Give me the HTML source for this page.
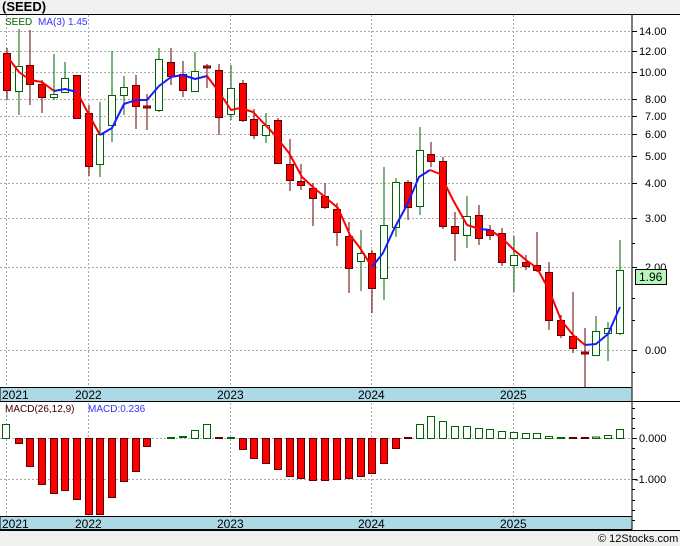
<!DOCTYPE html>
<html><head><meta charset="utf-8"><style>
html,body{margin:0;padding:0;background:#f0f0f0;}
svg{display:block;font-family:"Liberation Sans",sans-serif;}
</style></head><body>
<svg width="680" height="546" viewBox="0 0 680 546" xmlns="http://www.w3.org/2000/svg">
<rect x="0" y="0" width="680" height="546" fill="#f0f0f0"/>
<text x="2" y="11" font-size="13" font-weight="bold" fill="#000">(SEED)</text>
<rect x="0" y="14" width="680" height="516" fill="#fff"/>
<line x1="0" y1="14.5" x2="680" y2="14.5" stroke="#000"/>
<!-- grid -->
<g stroke="#aaa" stroke-dasharray="2,2" stroke-width="1">
<line x1="0" y1="31.5" x2="632" y2="31.5"/><line x1="0" y1="51.5" x2="632" y2="51.5"/><line x1="0" y1="72.5" x2="632" y2="72.5"/><line x1="0" y1="99.5" x2="632" y2="99.5"/><line x1="0" y1="116.5" x2="632" y2="116.5"/><line x1="0" y1="134.5" x2="632" y2="134.5"/><line x1="0" y1="156.5" x2="632" y2="156.5"/><line x1="0" y1="183.5" x2="632" y2="183.5"/><line x1="0" y1="218.5" x2="632" y2="218.5"/><line x1="0" y1="267.5" x2="632" y2="267.5"/><line x1="0" y1="350.5" x2="632" y2="350.5"/>
<line x1="6.5" y1="15" x2="6.5" y2="530"/><line x1="88.5" y1="15" x2="88.5" y2="530"/><line x1="230.5" y1="15" x2="230.5" y2="530"/><line x1="371.5" y1="15" x2="371.5" y2="530"/><line x1="513.5" y1="15" x2="513.5" y2="530"/>
<line x1="0" y1="438.5" x2="632" y2="438.5"/><line x1="0" y1="479.5" x2="632" y2="479.5"/>
</g>
<text x="5" y="25" font-size="10" fill="#006400">SEED</text>
<text x="38" y="25" font-size="10" fill="#3333ff">MA(3)  1.45</text>
<!-- candles -->
<g stroke-width="1">
<g stroke="#600000">
<line x1="7" y1="48" x2="7" y2="100"/><line x1="30" y1="30" x2="30" y2="105"/><line x1="42" y1="80" x2="42" y2="113"/><line x1="77" y1="75" x2="77" y2="118"/><line x1="89" y1="105" x2="89" y2="176"/><line x1="136" y1="75" x2="136" y2="129"/><line x1="147" y1="94" x2="147" y2="130"/><line x1="171" y1="48" x2="171" y2="85"/><line x1="183" y1="61" x2="183" y2="97"/><line x1="207" y1="64" x2="207" y2="88"/><line x1="219" y1="64" x2="219" y2="135"/><line x1="243" y1="80" x2="243" y2="122"/><line x1="254" y1="109" x2="254" y2="139"/><line x1="278" y1="118" x2="278" y2="163"/><line x1="290" y1="139" x2="290" y2="191"/><line x1="301" y1="164" x2="301" y2="190"/><line x1="313" y1="183" x2="313" y2="226"/><line x1="325" y1="183" x2="325" y2="209"/><line x1="337" y1="203" x2="337" y2="246"/><line x1="349" y1="222" x2="349" y2="293"/><line x1="372" y1="250" x2="372" y2="313"/><line x1="408" y1="180" x2="408" y2="220"/><line x1="431" y1="142" x2="431" y2="167"/><line x1="443" y1="157" x2="443" y2="229"/><line x1="455" y1="212" x2="455" y2="261"/><line x1="479" y1="205" x2="479" y2="245"/><line x1="490" y1="225" x2="490" y2="240"/><line x1="502" y1="228" x2="502" y2="266"/><line x1="526" y1="255" x2="526" y2="270"/><line x1="537" y1="232" x2="537" y2="272"/><line x1="549" y1="262" x2="549" y2="330"/><line x1="561" y1="315" x2="561" y2="338"/><line x1="573" y1="292" x2="573" y2="353"/><line x1="585" y1="328" x2="585" y2="387"/>
</g>
<g fill="#ff0000" stroke="#600000">
<rect x="3.5" y="53.5" width="7" height="37"/><rect x="26.5" y="65.5" width="7" height="19"/><rect x="38.5" y="84.5" width="7" height="13"/><rect x="73.5" y="75.5" width="7" height="43"/><rect x="85.5" y="113.5" width="7" height="53"/><rect x="132.5" y="85.5" width="7" height="21"/><rect x="143.5" y="106" width="7" height="2"/><rect x="167.5" y="62.5" width="7" height="14"/><rect x="179.5" y="74.5" width="7" height="16"/><rect x="203.5" y="66" width="7" height="2"/><rect x="215.5" y="70.5" width="7" height="47"/><rect x="239.5" y="83.5" width="7" height="37"/><rect x="250.5" y="119.5" width="7" height="16"/><rect x="274.5" y="120.5" width="7" height="43"/><rect x="286.5" y="164.5" width="7" height="16"/><rect x="297.5" y="181.5" width="7" height="4"/><rect x="309.5" y="188.5" width="7" height="10"/><rect x="321.5" y="196.5" width="7" height="11"/><rect x="333.5" y="209.5" width="7" height="23"/><rect x="345.5" y="236.5" width="7" height="32"/><rect x="368.5" y="253.5" width="7" height="35"/><rect x="404.5" y="182.5" width="7" height="25"/><rect x="427.5" y="154.5" width="7" height="7"/><rect x="439.5" y="161.5" width="7" height="65"/><rect x="451.5" y="226.5" width="7" height="7"/><rect x="475.5" y="215.5" width="7" height="23"/><rect x="486.5" y="230.5" width="7" height="5"/><rect x="498.5" y="233.5" width="7" height="29"/><rect x="522.5" y="262.5" width="7" height="4"/><rect x="533.5" y="265.5" width="7" height="5"/><rect x="545.5" y="272.5" width="7" height="48"/><rect x="557.5" y="320.5" width="7" height="15"/><rect x="569.5" y="336.5" width="7" height="12"/><rect x="581.5" y="352" width="7" height="2"/>
</g>
<g stroke="#006400">
<line x1="19" y1="29" x2="19" y2="115"/><line x1="54" y1="54" x2="54" y2="100"/><line x1="65" y1="62" x2="65" y2="92"/><line x1="100" y1="102" x2="100" y2="177"/><line x1="112" y1="51" x2="112" y2="142"/><line x1="124" y1="76" x2="124" y2="115"/><line x1="159" y1="48" x2="159" y2="112"/><line x1="195" y1="52" x2="195" y2="92"/><line x1="231" y1="65" x2="231" y2="120"/><line x1="266" y1="113" x2="266" y2="143"/><line x1="361" y1="230" x2="361" y2="291"/><line x1="384" y1="167" x2="384" y2="300"/><line x1="396" y1="178" x2="396" y2="237"/><line x1="420" y1="127" x2="420" y2="215"/><line x1="467" y1="196" x2="467" y2="248"/><line x1="514" y1="236" x2="514" y2="292"/><line x1="596" y1="316" x2="596" y2="356"/><line x1="608" y1="322" x2="608" y2="361"/><line x1="620" y1="240" x2="620" y2="335"/>
</g>
<g fill="#fff" stroke="#006400">
<rect x="15.5" y="66.5" width="7" height="25"/><rect x="50.5" y="94.5" width="7" height="3"/><rect x="61.5" y="78.5" width="7" height="14"/><rect x="96.5" y="134.5" width="7" height="30"/><rect x="108.5" y="95.5" width="7" height="30"/><rect x="120.5" y="87.5" width="7" height="8"/><rect x="155.5" y="59.5" width="7" height="51"/><rect x="191.5" y="71.5" width="7" height="20"/><rect x="227.5" y="88.5" width="7" height="26"/><rect x="262.5" y="125.5" width="7" height="10"/><rect x="357.5" y="253.5" width="7" height="8"/><rect x="380.5" y="225.5" width="7" height="53"/><rect x="392.5" y="182.5" width="7" height="45"/><rect x="416.5" y="150.5" width="7" height="56"/><rect x="463.5" y="216.5" width="7" height="19"/><rect x="510.5" y="255.5" width="7" height="10"/><rect x="592.5" y="331.5" width="7" height="24"/><rect x="604.5" y="328.5" width="7" height="5"/><rect x="616.5" y="270.5" width="7" height="63"/>
</g>
</g>
<!-- MA -->
<g fill="none" stroke-width="2" stroke-linejoin="round">
<polyline stroke="#ff0000" points="6,55 19,72 30,80 42,82 54,91"/>
<polyline stroke="#1a1aff" points="54,91 65,89 77,92"/>
<polyline stroke="#ff0000" points="77,92 88,113 100,135"/>
<polyline stroke="#1a1aff" points="100,135 112,128 124,104 136,100 147,100 159,86 171,77 183,75 195,79 207,76"/>
<polyline stroke="#ff0000" points="207,76 219,92 231,110 240,108 253,112 273,133 289,153 302,177 314,188 325,197 338,208 350,235 360,248 372,267"/>
<polyline stroke="#1a1aff" points="372,267 383,253 395,227 407,205 419,177 430,170"/>
<polyline stroke="#ff0000" points="430,170 440,174 453,200 467,225 480,229"/>
<polyline stroke="#1a1aff" points="480,229 490,230"/>
<polyline stroke="#ff0000" points="490,230 502,238 514,250 526,260 537,268 549,290 561,320 573,335 585,345"/>
<polyline stroke="#1a1aff" points="585,345 596,344 608,334 620,307"/>
</g>
<!-- date bands -->
<rect x="0" y="387.5" width="632" height="14" fill="#add8e6" stroke="#000"/>
<rect x="0" y="516.5" width="632" height="13" fill="#add8e6" stroke="#000"/>
<g font-size="12" fill="#000">
<text x="2" y="399">2021</text><text x="75" y="399">2022</text><text x="217" y="399">2023</text><text x="358" y="399">2024</text><text x="500" y="399">2025</text>
<text x="2" y="528">2021</text><text x="75" y="528">2022</text><text x="217" y="528">2023</text><text x="358" y="528">2024</text><text x="500" y="528">2025</text>
</g>
<line x1="632" y1="14" x2="632" y2="530" stroke="#000"/>
<line x1="632" y1="401.5" x2="680" y2="401.5" stroke="#000"/>
<line x1="0" y1="530.5" x2="680" y2="530.5" stroke="#000"/>
<!-- axis ticks -->
<g stroke="#000">
<line x1="632" y1="31.5" x2="637" y2="31.5"/><line x1="632" y1="51.5" x2="637" y2="51.5"/><line x1="632" y1="72.5" x2="637" y2="72.5"/><line x1="632" y1="99.5" x2="637" y2="99.5"/><line x1="632" y1="116.5" x2="637" y2="116.5"/><line x1="632" y1="134.5" x2="637" y2="134.5"/><line x1="632" y1="156.5" x2="637" y2="156.5"/><line x1="632" y1="183.5" x2="637" y2="183.5"/><line x1="632" y1="218.5" x2="637" y2="218.5"/><line x1="632" y1="267.5" x2="637" y2="267.5"/><line x1="632" y1="350.5" x2="637" y2="350.5"/>
<line x1="632" y1="298.5" x2="635" y2="298.5"/><line x1="632" y1="320.5" x2="635" y2="320.5"/><line x1="632" y1="372.5" x2="635" y2="372.5"/><line x1="632" y1="243.5" x2="635" y2="243.5"/>
<line x1="632" y1="408.5" x2="635" y2="408.5"/><line x1="632" y1="418.5" x2="635" y2="418.5"/><line x1="632" y1="428.5" x2="635" y2="428.5"/><line x1="632" y1="438.5" x2="637" y2="438.5"/><line x1="632" y1="448.5" x2="635" y2="448.5"/><line x1="632" y1="459.5" x2="635" y2="459.5"/><line x1="632" y1="469.5" x2="635" y2="469.5"/><line x1="632" y1="479.5" x2="637" y2="479.5"/><line x1="632" y1="489.5" x2="635" y2="489.5"/><line x1="632" y1="500.5" x2="635" y2="500.5"/><line x1="632" y1="510.5" x2="635" y2="510.5"/><line x1="632" y1="520.5" x2="635" y2="520.5"/>
</g>
<g font-size="11" fill="#000" font-family="Liberation Sans,sans-serif">
<text x="639" y="35">14.00</text><text x="639" y="55">12.00</text><text x="639" y="76">10.00</text><text x="645" y="103">8.00</text><text x="645" y="120">7.00</text><text x="645" y="138">6.00</text><text x="645" y="160">5.00</text><text x="645" y="187">4.00</text><text x="645" y="222">3.00</text><text x="645" y="271">2.00</text><text x="645" y="354">0.00</text>
<text x="639" y="442">0.000</text><text x="635" y="483">-1.000</text>
</g>
<rect x="635.5" y="269.5" width="31" height="15" fill="#b8f5b8" stroke="#000"/>
<text x="639" y="281" font-size="12" fill="#000">1.96</text>
<!-- MACD -->
<text x="5" y="412" font-size="10" fill="#400000">MACD(26,12,9)</text>
<text x="88" y="412" font-size="10" fill="#3333ff">MACD:0.236</text>
<g fill="#ff0000" stroke="#600000">
<rect x="15.5" y="438.5" width="7" height="5"/><rect x="26.5" y="438.5" width="7" height="28"/><rect x="38.5" y="438.5" width="7" height="46"/><rect x="50.5" y="438.5" width="7" height="55"/><rect x="61.5" y="438.5" width="7" height="52"/><rect x="73.5" y="438.5" width="7" height="61"/><rect x="85.5" y="438.5" width="7" height="76"/><rect x="96.5" y="438.5" width="7" height="76"/><rect x="108.5" y="438.5" width="7" height="59"/><rect x="120.5" y="438.5" width="7" height="43"/><rect x="132.5" y="438.5" width="7" height="33"/><rect x="143.5" y="438.5" width="7" height="8"/>
<rect x="239.5" y="438.5" width="7" height="11"/><rect x="250.5" y="438.5" width="7" height="20"/><rect x="262.5" y="438.5" width="7" height="25"/><rect x="274.5" y="438.5" width="7" height="31"/><rect x="286.5" y="438.5" width="7" height="38"/><rect x="297.5" y="438.5" width="7" height="40"/><rect x="309.5" y="438.5" width="7" height="42"/><rect x="321.5" y="438.5" width="7" height="42"/><rect x="333.5" y="438.5" width="7" height="41"/><rect x="345.5" y="438.5" width="7" height="40"/><rect x="357.5" y="438.5" width="7" height="38"/><rect x="368.5" y="438.5" width="7" height="35"/><rect x="380.5" y="438.5" width="7" height="25"/><rect x="392.5" y="438.5" width="7" height="10"/>
</g>
<g fill="#fff" stroke="#006400">
<rect x="2.5" y="424.5" width="7" height="14"/><rect x="191.5" y="430.5" width="7" height="8"/><rect x="203.5" y="424.5" width="7" height="14"/>
<rect x="416.5" y="424.5" width="7" height="14"/><rect x="427.5" y="416.5" width="7" height="22"/><rect x="439.5" y="421.5" width="7" height="17"/><rect x="451.5" y="426.5" width="7" height="12"/><rect x="463.5" y="426.5" width="7" height="12"/><rect x="475.5" y="428.5" width="7" height="10"/><rect x="486.5" y="429.5" width="7" height="9"/><rect x="498.5" y="431.5" width="7" height="7"/><rect x="510.5" y="432.5" width="7" height="6"/><rect x="522.5" y="433.5" width="7" height="5"/><rect x="533.5" y="433.5" width="7" height="5"/><rect x="545.5" y="436.5" width="7" height="2"/><rect x="592.5" y="437" width="7" height="1.5"/><rect x="604.5" y="435.5" width="7" height="3"/><rect x="616.5" y="429.5" width="7" height="9"/>
</g>
<g stroke-width="2">
<line x1="167" y1="438" x2="175" y2="438" stroke="#006400"/><line x1="179" y1="437" x2="187" y2="437" stroke="#006400"/><line x1="227" y1="438" x2="235" y2="438" stroke="#006400"/><line x1="404" y1="438" x2="412" y2="438" stroke="#600000"/><line x1="557" y1="438" x2="565" y2="438" stroke="#006400"/><line x1="569" y1="438" x2="577" y2="438" stroke="#600000"/><line x1="581" y1="438" x2="589" y2="438" stroke="#600000"/><line x1="215" y1="438" x2="223" y2="438" stroke="#600000"/>
</g>
<text x="598" y="542" font-size="11" fill="#000">© 12Stocks.com</text>
</svg>
</body></html>
